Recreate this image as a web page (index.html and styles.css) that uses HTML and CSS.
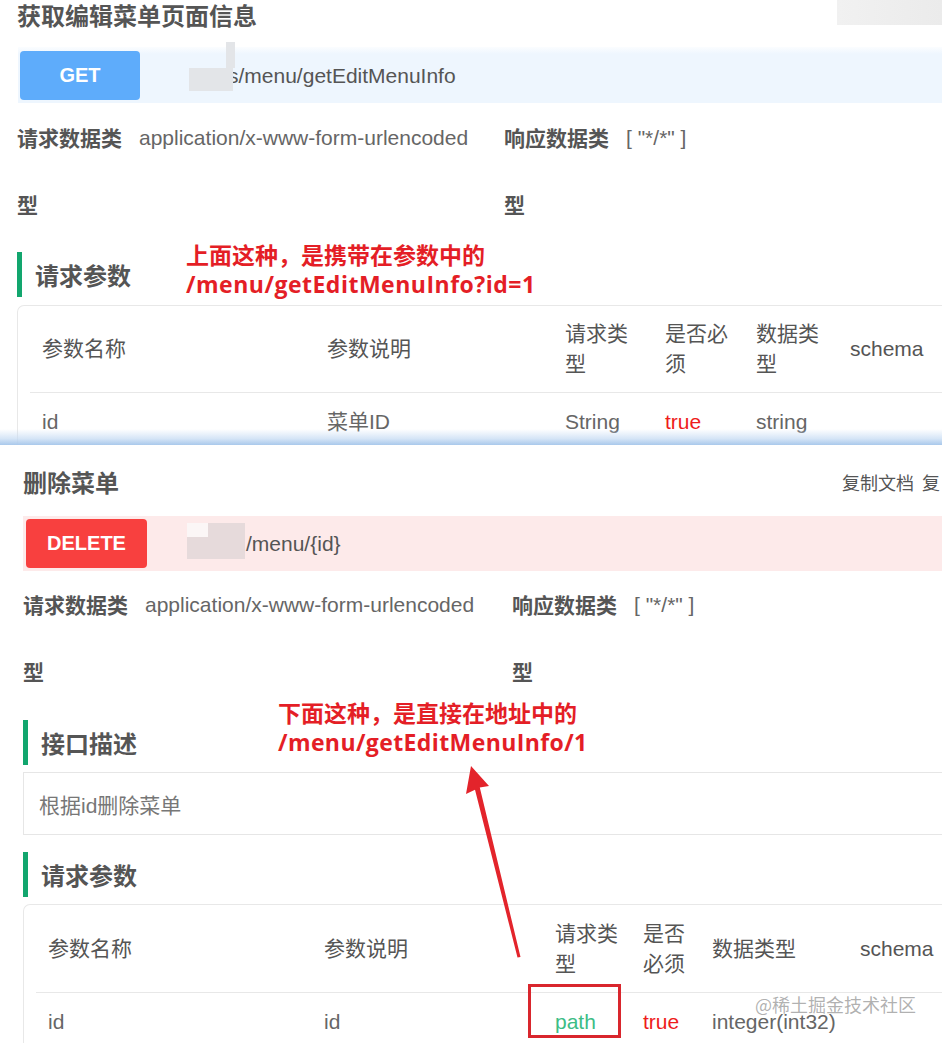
FILE: index.html
```html
<!DOCTYPE html>
<html lang="zh-CN">
<head>
<meta charset="utf-8">
<title>接口文档</title>
<link rel="stylesheet" href="styles.css">
</head>
<body>
<div class="page">
  <section class="panel panel-top">
    <div class="title-row">
      <h2 class="api-title">获取编辑菜单页面信息</h2>
      <div class="mask-corner"></div>
    </div>
    <div class="method-bar bar-get">
      <span class="method-btn btn-get">GET</span>
      <span class="api-path path-get">s/menu/getEditMenuInfo</span>
      <span class="mask mask-get-a"></span>
      <span class="mask mask-get-b"></span>
    </div>
    <div class="meta-row meta-top">
      <div class="meta-item"><span class="meta-label">请求数据类型</span><span class="meta-value">application/x-www-form-urlencoded</span></div>
      <div class="meta-item"><span class="meta-label">响应数据类型</span><span class="meta-value">[ "*/*" ]</span></div>
    </div>
    <h3 class="section-title">请求参数</h3>
    <div class="param-card">
      <table class="param-table table-top">
        <colgroup><col class="c285"><col class="c238"><col class="c100"><col class="c91"><col class="c94"><col class="c150"></colgroup>
        <thead>
          <tr><th>参数名称</th><th>参数说明</th><th>请求类型</th><th>是否必须</th><th>数据类型</th><th>schema</th></tr>
        </thead>
        <tbody>
          <tr><td>id</td><td>菜单ID</td><td>String</td><td class="is-true">true</td><td>string</td><td></td></tr>
        </tbody>
      </table>
    </div>
  </section>

  <section class="panel panel-bottom">
    <div class="title-row title-row-b">
      <h2 class="api-title">删除菜单</h2>
      <div class="doc-actions">复制文档 复制地址</div>
    </div>
    <div class="method-bar bar-delete">
      <span class="method-btn btn-delete">DELETE</span>
      <span class="api-path path-delete">/menu/{id}</span>
      <span class="mask mask-del-a"></span>
      <span class="mask mask-del-b"></span>
    </div>
    <div class="meta-row meta-bottom">
      <div class="meta-item"><span class="meta-label">请求数据类型</span><span class="meta-value">application/x-www-form-urlencoded</span></div>
      <div class="meta-item"><span class="meta-label">响应数据类型</span><span class="meta-value">[ "*/*" ]</span></div>
    </div>
    <h3 class="section-title section-desc">接口描述</h3>
    <div class="desc-box">根据id删除菜单</div>
    <h3 class="section-title section-params">请求参数</h3>
    <div class="param-card card-bottom">
      <table class="param-table table-bottom">
        <colgroup><col class="c276"><col class="c231"><col class="c88"><col class="c69"><col class="c148"><col class="c150"></colgroup>
        <thead>
          <tr><th>参数名称</th><th>参数说明</th><th>请求类型</th><th>是否必须</th><th>数据类型</th><th>schema</th></tr>
        </thead>
        <tbody>
          <tr><td>id</td><td>id</td><td class="is-path">path</td><td class="is-true">true</td><td>integer(int32)</td><td></td></tr>
        </tbody>
      </table>
    </div>
  </section>

  <div class="note note-top">上面这种，是携带在参数中的<br><span class="note-url url-top">/menu/getEditMenuInfo?id=1</span></div>
  <div class="note note-bottom">下面这种，是直接在地址中的<br><span class="note-url url-bottom">/menu/getEditMenuInfo/1</span></div>
  <svg class="arrow" width="942" height="1043" viewBox="0 0 942 1043" aria-hidden="true">
    <polygon points="471,766 489,786 479.8,787.5 520.5,957 517.5,957.5 475,789.8 466,794" fill="#e3242b"/>
  </svg>
  <div class="highlight-box"></div>
  <div class="watermark">@稀土掘金技术社区</div>
</div>
</body>
</html>
```

FILE: styles.css
```css
* { box-sizing: border-box; }
html, body { margin: 0; padding: 0; background: #fff; }
body {
  font-family: "Liberation Sans", "Noto Sans CJK SC", sans-serif;
  font-size: 21px;
  color: #666;
}
.page {
  position: relative;
  width: 942px;
  height: 1043px;
  overflow: hidden;
}
.panel {
  position: relative;
  overflow: hidden;
}
.panel-top {
  height: 445px;
  padding-left: 17px;
}
.panel-top::after {
  content: "";
  position: absolute;
  left: 0;
  right: 0;
  bottom: 0;
  height: 16px;
  background: linear-gradient(to bottom, rgba(220,234,250,0) 0%, rgba(196,218,243,0.7) 60%, #a9c8eb 100%);
}
.panel-bottom {
  height: 598px;
  padding-left: 23px;
}

/* title */
.title-row {
  display: flex;
  align-items: flex-start;
}
.api-title {
  margin: 0;
  font-family: "Noto Sans CJK SC", sans-serif;
  font-size: 24px;
  line-height: 32px;
  font-weight: 700;
  color: #555;
}
.panel-top .api-title { margin-top: -1px; }
.mask-corner {
  margin-left: auto;
  width: 105px;
  height: 25px;
  background: linear-gradient(to right, #f1f1f1, #ebebeb);
}
.title-row-b {
  margin-top: 19px;
  align-items: center;
}
.title-row-b .api-title { line-height: 36px; }
.doc-actions {
  margin-left: auto;
  margin-right: 2px;
  width: 98px;
  white-space: nowrap;
  overflow: hidden;
  word-spacing: 4px;
  font-family: "Noto Sans CJK SC", sans-serif;
  font-size: 18px;
  line-height: 26px;
  color: #555;
}

/* method bar */
.method-bar {
  position: relative;
  display: flex;
  align-items: center;
}
.bar-get {
  margin-top: 16px;
  margin-left: 1px;
  padding: 4px 0 3px 2px;
  background: linear-gradient(to bottom, #fbfdff 0, #eef6fe 7px, #eef6fe 100%);
}
.bar-delete {
  margin-top: 16px;
  padding: 3px 0 3px 3px;
  background: #fdeaea;
}
.method-btn {
  display: flex;
  align-items: center;
  justify-content: center;
  height: 49px;
  border-radius: 4px;
  color: #fff;
  font-family: "Liberation Sans", sans-serif;
  font-weight: 700;
  font-size: 20px;
}
.btn-get { width: 120px; background: #5eacfb; }
.btn-delete { width: 121px; background: #f8403f; }
.api-path {
  font-size: 21px;
  color: #555;
}
.path-get { margin-left: 88px; }
.path-delete { margin-left: 99px; }
.mask { position: absolute; }
.mask-get-a { left: 208px; top: -5px; width: 9px; height: 26px; background: #e3e5e8; }
.mask-get-b { left: 171px; top: 21px; width: 44px; height: 23px; background: #e3e5e8; }
.mask-del-b { left: 164px; top: 7px; width: 58px; height: 36px; background: #e6dadb; }
.mask-del-a { left: 164px; top: 7px; width: 21px; height: 14px; background: #fbf6f6; z-index: 1; }

/* meta */
.meta-row {
  display: grid;
  line-height: 67px;
}
.meta-top { margin-top: 1px; grid-template-columns: 487px 1fr; }
.meta-bottom { grid-template-columns: 489px 1fr; }
.meta-item {
  display: flex;
  align-items: flex-start;
}
.meta-label {
  flex: 0 0 110px;
  width: 110px;
  font-family: "Noto Sans CJK SC", sans-serif;
  font-weight: 700;
  color: #555;
}
.meta-value {
  margin-left: 12px;
  white-space: nowrap;
  color: #666;
}

/* section headings */
.section-title {
  margin: 14px 0 0 0;
  border-left: 5px solid #12a66e;
  padding-left: 13px;
  height: 45px;
  line-height: 45px;
  font-family: "Noto Sans CJK SC", sans-serif;
  font-size: 24px;
  font-weight: 700;
  color: #555;
}
.section-desc { margin-top: 15px; }
.section-params { margin-top: 17px; }

.desc-box {
  margin-top: 7px;
  height: 63px;
  width: 1000px;
  border: 1px solid #e6e6e6;
  padding: 4px 0 0 15px;
  line-height: 58px;
  color: #777;
}

/* table */
.param-card {
  margin-top: 8px;
  width: 1100px;
  border: 1px solid #e8e8e8;
  border-right: none;
  border-bottom: none;
  border-radius: 7px 0 0 0;
  padding: 0 12px;
}
.card-bottom { margin-top: 7px; }
.param-table {
  table-layout: fixed;
  border-collapse: collapse;
  width: 958px;
}
.table-bottom { width: 962px; }
.c285 { width: 285px; } .c238 { width: 238px; } .c100 { width: 100px; }
.c91 { width: 91px; } .c94 { width: 94px; } .c150 { width: 150px; }
.c276 { width: 276px; } .c231 { width: 231px; } .c88 { width: 88px; }
.c69 { width: 69px; } .c148 { width: 148px; }
.param-table th {
  text-align: left;
  font-weight: 400;
  color: #555;
  line-height: 30px;
  padding: 13px 12px 13px 12px;
  border-bottom: 1px solid #e8e8e8;
  vertical-align: middle;
}
.table-bottom th { padding-top: 14px; }
.param-table td {
  line-height: 30px;
  padding: 14px 12px;
  color: #666;
  white-space: nowrap;
}
.param-table td.is-true { color: #ee1c1c; }
.param-table td.is-path { color: #3dbd86; }

/* annotations */
.note {
  position: absolute;
  font-family: "Open Sans", "Noto Sans CJK SC", sans-serif;
  font-weight: 700;
  font-size: 23px;
  line-height: 29px;
  color: #e41e26;
  white-space: nowrap;
}
.note-top { left: 186px; top: 241px; }
.note-bottom { left: 278px; top: 699px; }
.url-top { letter-spacing: 0.5px; }
.url-bottom { letter-spacing: 0.4px; }
.arrow {
  position: absolute;
  left: 0;
  top: 0;
  pointer-events: none;
}
.highlight-box {
  position: absolute;
  left: 528px;
  top: 984px;
  width: 93px;
  height: 54px;
  border: 3px solid #d9262d;
}
.watermark {
  position: absolute;
  left: 755px;
  top: 992px;
  font-family: "Noto Sans CJK SC", sans-serif;
  font-size: 18px;
  line-height: 24px;
  color: rgba(110,110,110,0.55);
  white-space: nowrap;
}
```
